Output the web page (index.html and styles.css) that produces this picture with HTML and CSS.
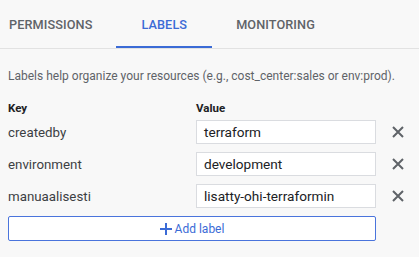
FILE: index.html
```html
<!DOCTYPE html>
<html>
<head>
<meta charset="utf-8">
<link rel="stylesheet" href="styles.css">
</head>
<body>
<div class="tabs">
  <div class="tab tab-first">PERMISSIONS</div>
  <div class="tab tab-active">LABELS</div>
  <div class="tab">MONITORING</div>
</div>
<div class="content">
  <p class="desc">Labels help organize your resources (e.g., cost_center:sales or env:prod).</p>
  <div class="head">
    <div class="head-key">Key</div>
    <div class="head-value">Value</div>
  </div>
  <div class="rows">
    <div class="key">createdby</div>
    <div class="value">terraform</div>
    <div class="remove"><svg width="12" height="12" viewBox="0 0 12 12"><path d="M1 1L11 11M11 1L1 11" stroke="#5f6368" stroke-width="2"/></svg></div>
    <div class="key">environment</div>
    <div class="value">development</div>
    <div class="remove"><svg width="12" height="12" viewBox="0 0 12 12"><path d="M1 1L11 11M11 1L1 11" stroke="#5f6368" stroke-width="2"/></svg></div>
    <div class="key">manuaalisesti</div>
    <div class="value">lisatty-ohi-terraformin</div>
    <div class="remove"><svg width="12" height="12" viewBox="0 0 12 12"><path d="M1 1L11 11M11 1L1 11" stroke="#5f6368" stroke-width="2"/></svg></div>
  </div>
  <div class="add">
    <svg width="12" height="12" viewBox="0 0 12 12"><path d="M6 0V12M0 6H12" stroke="#3b6bd6" stroke-width="2"/></svg>
    <span>Add label</span>
  </div>
</div>
</body>
</html>
```
FILE: styles.css
```css
html, body {
  margin: 0;
  padding: 0;
  background: #f8f8f8;
  font-family: Roboto, "Liberation Sans", sans-serif;
}
.tabs {
  display: flex;
  height: 48px;
  border-bottom: 1px solid #e2e2e2;
}
.tab {
  position: relative;
  padding: 0 24px;
  display: flex;
  align-items: center;
  font-size: 12.7px;
  font-weight: 500;
  color: #5f6368;
  letter-spacing: 0.1px;
}
.tab-first {
  padding-left: 9px;
}
.tab-active {
  color: #3b6bd6;
  padding: 0 25px;
}
.tab-active::after {
  content: "";
  position: absolute;
  left: 0;
  right: 0;
  bottom: 0;
  height: 2px;
  background: #3b6bd6;
}
.content {
  padding: 17px 8px 0;
}
.desc {
  margin: 0;
  font-size: 12px;
  line-height: 20px;
  color: #5f6368;
  white-space: nowrap;
}
.head {
  display: flex;
  margin-top: 12px;
  margin-bottom: 2px;
  font-size: 11.5px;
  font-weight: 700;
  line-height: 20px;
  color: #202124;
}
.head-key {
  width: 188px;
}
.rows {
  display: grid;
  grid-template-columns: 188px 180px 43px;
  row-gap: 8px;
  align-items: center;
}
.key {
  font-size: 13.3px;
  color: #3c4043;
}
.value {
  box-sizing: border-box;
  height: 24px;
  border: 1px solid #dadce0;
  background: #fff;
  padding: 0 7px;
  font-size: 13.6px;
  line-height: 22px;
  color: #202124;
}
.remove {
  display: flex;
  justify-content: center;
  align-items: center;
  padding-left: 1px;
}
.add {
  box-sizing: border-box;
  margin-top: 8px;
  width: 368px;
  height: 25px;
  border: 1px solid #4a74dc;
  border-radius: 2px;
  background: #fff;
  display: flex;
  justify-content: center;
  align-items: center;
  gap: 3px;
  color: #3b6bd6;
  font-size: 12px;
}
```
